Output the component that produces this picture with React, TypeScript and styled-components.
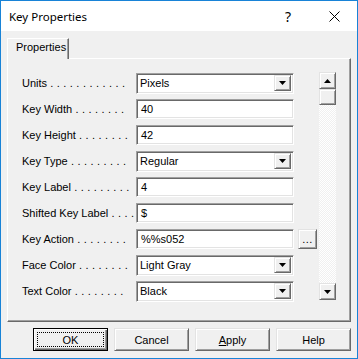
import React from "react";
import styled, { createGlobalStyle, css } from "styled-components";

const FACE = "#f0f0f0";
const LIGHT = "#e3e3e3";
const HILITE = "#ffffff";
const SHADOW = "#a0a0a0";
const DARK = "#696969";
const UI_FONT = `"Liberation Sans", Arial, sans-serif`;

const GlobalStyle = createGlobalStyle`
  html, body { margin: 0; padding: 0; background: #ffffff; }
  body { font-family: ${UI_FONT}; font-size: 11px; color: #000; }
  * { box-sizing: border-box; }
`;

const raised = css`
  background: ${FACE};
  border-top: 1px solid ${LIGHT};
  border-left: 1px solid ${LIGHT};
  border-right: 1px solid ${DARK};
  border-bottom: 1px solid ${DARK};
  box-shadow: inset 1px 1px ${HILITE}, inset -1px -1px ${SHADOW};
`;

const sunken = css`
  background: #ffffff;
  border-top: 1px solid ${SHADOW};
  border-left: 1px solid ${SHADOW};
  border-right: 1px solid ${HILITE};
  border-bottom: 1px solid ${HILITE};
  box-shadow: inset 1px 1px ${DARK}, inset -1px -1px ${LIGHT};
`;

const Window = styled.div`
  width: 358px;
  height: 359px;
  border: 1px solid #1883d7;
  display: flex;
  flex-direction: column;
  background: ${FACE};
  overflow: hidden;
`;

const TitleBar = styled.div`
  flex: none;
  height: 30px;
  background: #ffffff;
  display: flex;
  align-items: center;
`;

const Title = styled.div`
  flex: 1;
  padding-left: 8px;
  font-family: "Segoe UI", "Noto Sans", sans-serif;
  font-size: 11.5px;
  font-weight: 400;
  color: #000;
`;

const CaptionButton = styled.div`
  width: 46px;
  height: 30px;
  display: flex;
  align-items: center;
  justify-content: center;
  font-family: "Segoe UI", "Noto Sans", sans-serif;
  font-size: 14px;
  color: #000;
`;

const Client = styled.div`
  flex: 1;
  display: flex;
  flex-direction: column;
  padding: 7px 6px 7px 6px;
`;

const TabStrip = styled.div`
  display: flex;
  height: 20px;
  position: relative;
  z-index: 1;
`;

const Tab = styled.div`
  width: 62px;
  height: 21px;
  background: ${FACE};
  border-top: 1px solid ${HILITE};
  border-left: 1px solid ${HILITE};
  border-right: 1px solid ${DARK};
  box-shadow: inset -1px 0 ${SHADOW};
  padding-left: 8px;
  line-height: 17px;
  font-size: 11px;
`;

const Panel = styled.div`
  height: 264px;
  display: flex;
  align-items: flex-start;
  border-top: 1px solid ${HILITE};
  border-left: 1px solid ${HILITE};
  border-right: 1px solid ${DARK};
  border-bottom: 1px solid ${DARK};
  box-shadow: inset -1px -1px ${SHADOW};
  padding: 13px 0 0 14px;
`;

const Form = styled.div`
  width: 295px;
  display: flex;
  flex-direction: column;
`;

const Row = styled.div`
  height: 26px;
  display: flex;
  align-items: flex-start;
`;

const Label = styled.div`
  width: 114px;
  padding-top: 1px;
  line-height: 21px;
  white-space: pre;
  font-size: 11px;
`;

const Leader = styled.span`
  letter-spacing: 0.2px;
`;

const Edit = styled.div`
  ${sunken};
  margin-top: 1px;
  width: 158px;
  height: 20px;
  padding-left: 4px;
  line-height: 18px;
  font-size: 11px;
`;

const Combo = styled.div`
  ${sunken};
  margin-top: 1px;
  width: 158px;
  height: 21px;
  display: flex;
  align-items: stretch;
  padding: 1px 2px 2px 1px;
`;

const ComboText = styled.div`
  flex: 1;
  padding-left: 2px;
  line-height: 17px;
  font-size: 11px;
`;

const ArrowButton = styled.div<{ $h?: number }>`
  ${raised};
  width: 17px;
  height: ${(p) => (p.$h ? `${p.$h}px` : "auto")};
  flex: none;
  display: flex;
  align-items: center;
  justify-content: center;
`;

const DotsButton = styled.div`
  ${raised};
  margin-top: 1px;
  margin-left: 4px;
  width: 19px;
  height: 20px;
  display: flex;
  align-items: flex-end;
  justify-content: center;
  padding-bottom: 4px;
  line-height: 10px;
  font-size: 11px;
  letter-spacing: 0.5px;
`;

const ScrollBar = styled.div`
  margin-left: 2px;
  width: 17px;
  height: 228px;
  display: flex;
  flex-direction: column;
`;

const Track = styled.div`
  flex: 1;
  background-color: #ffffff;
  background-image: repeating-conic-gradient(${FACE} 0% 25%, #ffffff 0% 50%);
  background-size: 2px 2px;
`;

const ButtonRow = styled.div`
  margin-top: 6px;
  display: flex;
  justify-content: flex-end;
  gap: 6px;
`;

const DlgButton = styled.div<{ $default?: boolean }>`
  width: 75px;
  height: 23px;
  display: flex;
  align-items: center;
  justify-content: center;
  position: relative;
  font-size: 11px;
  ${(p) =>
    p.$default
      ? css`
          background: ${FACE};
          border: 1px solid #000;
          box-shadow: inset 1px 1px ${HILITE}, inset -1px -1px ${DARK},
            inset -2px -2px ${SHADOW};
        `
      : raised};
`;

const FocusRing = styled.div`
  position: absolute;
  inset: 3px;
  border: 1px dotted #000;
  pointer-events: none;
`;

const Accel = styled.span`
  text-decoration: underline;
`;

const DownTri = () => (
  <svg width="7" height="4" viewBox="0 0 7 4">
    <polygon points="0,0 7,0 3.5,4" fill="#000" />
  </svg>
);

const UpTri = () => (
  <svg width="7" height="4" viewBox="0 0 7 4">
    <polygon points="0,4 7,4 3.5,0" fill="#000" />
  </svg>
);

type Field =
  | { kind: "combo"; value: string }
  | { kind: "edit"; value: string; more?: boolean };

const rows: { name: string; dots: number; field: Field }[] = [
  { name: "Units", dots: 12, field: { kind: "combo", value: "Pixels" } },
  { name: "Key Width", dots: 8, field: { kind: "edit", value: "40" } },
  { name: "Key Height", dots: 8, field: { kind: "edit", value: "42" } },
  { name: "Key Type", dots: 9, field: { kind: "combo", value: "Regular" } },
  { name: "Key Label", dots: 9, field: { kind: "edit", value: "4" } },
  { name: "Shifted Key Label", dots: 4, field: { kind: "edit", value: "$" } },
  { name: "Key Action", dots: 8, field: { kind: "edit", value: "%%s052", more: true } },
  { name: "Face Color", dots: 8, field: { kind: "combo", value: "Light Gray" } },
  { name: "Text Color", dots: 8, field: { kind: "combo", value: "Black" } },
];

export default function App() {
  return (
    <>
      <GlobalStyle />
      <Window>
        <TitleBar>
          <Title>Key Properties</Title>
          <CaptionButton>?</CaptionButton>
          <CaptionButton>
            <svg width="11" height="11" viewBox="0 0 11 11">
              <path d="M0.5 0.5 L10.5 10.5 M10.5 0.5 L0.5 10.5" stroke="#000" strokeWidth="1" fill="none" />
            </svg>
          </CaptionButton>
        </TitleBar>
        <Client>
          <TabStrip>
            <Tab>Properties</Tab>
          </TabStrip>
          <Panel>
            <Form>
              {rows.map((r) => (
                <Row key={r.name}>
                  <Label>
                    {r.name}
                    <Leader>{" .".repeat(r.dots)}</Leader>
                  </Label>
                  {r.field.kind === "combo" ? (
                    <Combo>
                      <ComboText>{r.field.value}</ComboText>
                      <ArrowButton>
                        <DownTri />
                      </ArrowButton>
                    </Combo>
                  ) : (
                    <>
                      <Edit>{r.field.value}</Edit>
                      {r.field.more && <DotsButton>...</DotsButton>}
                    </>
                  )}
                </Row>
              ))}
            </Form>
            <ScrollBar>
              <ArrowButton $h={17}>
                <UpTri />
              </ArrowButton>
              <ArrowButton $h={16} />
              <Track />
              <ArrowButton $h={17}>
                <DownTri />
              </ArrowButton>
            </ScrollBar>
          </Panel>
          <ButtonRow>
            <DlgButton $default>
              OK
              <FocusRing />
            </DlgButton>
            <DlgButton>Cancel</DlgButton>
            <DlgButton>
              <Accel>A</Accel>pply
            </DlgButton>
            <DlgButton>Help</DlgButton>
          </ButtonRow>
        </Client>
      </Window>
    </>
  );
}
